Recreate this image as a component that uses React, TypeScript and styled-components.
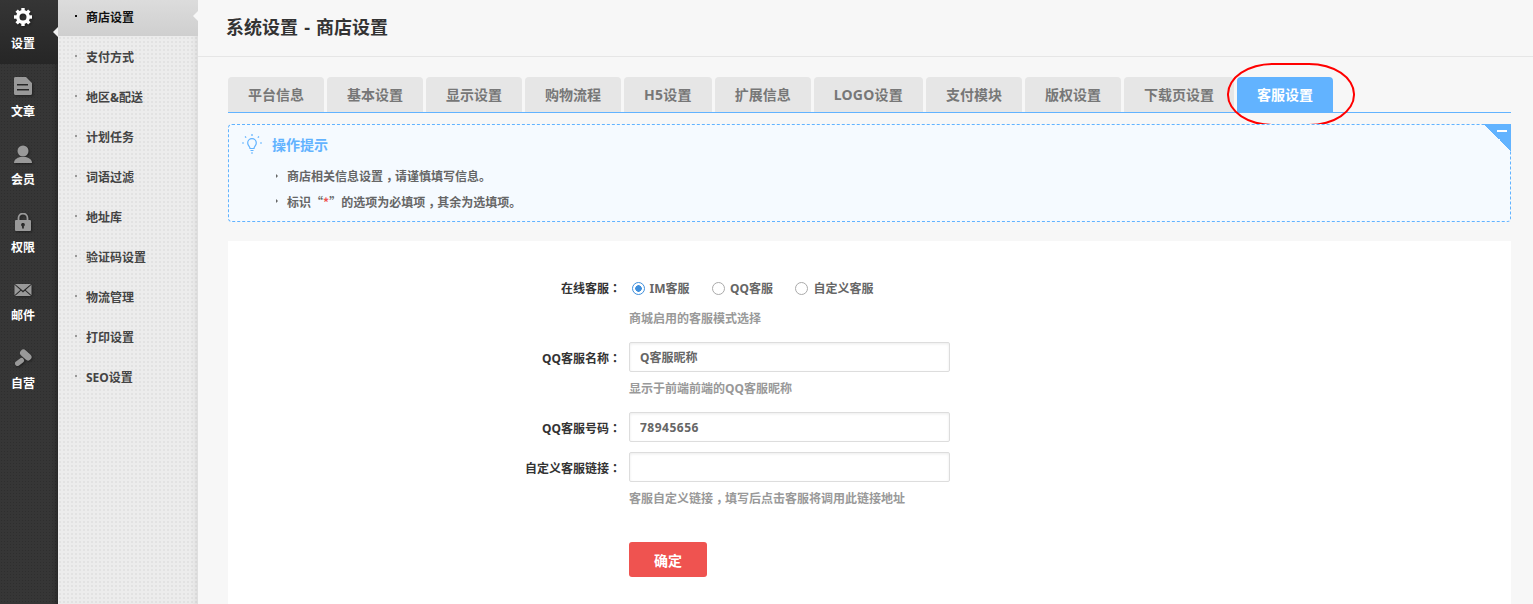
import React from 'react';
import styled, {createGlobalStyle} from 'styled-components';

const railItems = [
    {label: '设置', icon: 'gear', active: true},
    {label: '文章', icon: 'doc'},
    {label: '会员', icon: 'user'},
    {label: '权限', icon: 'lock'},
    {label: '邮件', icon: 'mail'},
    {label: '自营', icon: 'tool'},
];

const subItems = ['商店设置', '支付方式', '地区&配送', '计划任务', '词语过滤', '地址库', '验证码设置', '物流管理', '打印设置', 'SEO设置'];

const tabs = [
    {label: '平台信息'},
    {label: '基本设置'},
    {label: '显示设置'},
    {label: '购物流程'},
    {label: 'H5设置', latin: true},
    {label: '扩展信息'},
    {label: 'LOGO设置', latin: true},
    {label: '支付模块'},
    {label: '版权设置'},
    {label: '下载页设置'},
    {label: '客服设置', active: true},
];

const RailIcon = ({name}: {name: string}) => {
    const fill = name === 'gear' ? '#fff' : '#999';
    return (
        <svg width="18" height="18" viewBox="0 0 18 18" fill={fill}>
            {name === 'gear' && (
                <>
                    <circle cx="9" cy="9" r="5.200" fill="none" stroke="#fff" strokeWidth="3.400"/>
                    {[0, 45, 90, 135, 180, 225, 270, 315].map((deg) => (
                        <rect key={deg} x="7.300" y="0" width="3.400" height="4" transform={`rotate(${deg} 9 9)`}/>
                    ))}
                </>
            )}
            {name === 'doc' && (
                <path fillRule="evenodd"
                      d="M1.500 0H12l6 6v10.500a1.500 1.500 0 0 1-1.500 1.500h-15A1.500 1.500 0 0 1 0 16.500v-15A1.500 1.500 0 0 1 1.500 0zM3 7v1.600h11V7H3zm0 5v1.600h12V12H3z"/>
            )}
            {name === 'user' && (
                <>
                    <circle cx="9" cy="6" r="5.500"/>
                    <path d="M0 18c0-3.500 3-5 6-6h6c3 1 6 2.500 6 6z"/>
                </>
            )}
            {name === 'lock' && (
                <>
                    <path d="M4.500 8V5a4.500 4.500 0 0 1 9 0v3" fill="none" stroke="#999" strokeWidth="1.800"/>
                    <path fillRule="evenodd"
                          d="M2 7h14a1 1 0 0 1 1 1v9a1 1 0 0 1-1 1H2a1 1 0 0 1-1-1V8a1 1 0 0 1 1-1zm7 3a1.800 1.800 0 0 0-.9 3.400V15.500h1.800v-2.100A1.800 1.800 0 0 0 9 10z"/>
                </>
            )}
            {name === 'mail' && (
                <path d="M1 3h16L9 9.800 1 3zM.5 3.800 6.300 9 .5 14.300V3.800zm17 0v10.500L11.700 9l5.800-5.200zM7 9.700l2 1.700 2-1.700 6 5.300H1l6-5.300z"/>
            )}
            {name === 'tool' && (
                <>
                    <path d="M9.500 4 14 8" stroke="#999" strokeWidth="7" strokeLinecap="round"/>
                    <path d="M3.500 14.500 7.500 11.500" stroke="#999" strokeWidth="5" strokeLinecap="round"/>
                </>
            )}
        </svg>
    );
};

const App = () => {
    return (
        <Page>
            <GlobalStyle/>
            <Rail>
                {railItems.map((item) => (
                    <RailItem key={item.label} $active={item.active}>
                        <IconSlot $active={item.active}>
                            <RailIcon name={item.icon}/>
                        </IconSlot>
                        <RailLabel>{item.label}</RailLabel>
                    </RailItem>
                ))}
            </Rail>

            <SubMenu>
                {subItems.map((item, i) => (
                    <SubItem key={item} $active={i === 0}>{item}</SubItem>
                ))}
            </SubMenu>

            <Main>
                <TopBar>
                    <PageTitle>系统设置 - 商店设置</PageTitle>
                </TopBar>
                <Content>
                    <TabBar>
                        {tabs.map((tab) => (
                            <Tab key={tab.label} $active={tab.active} $latin={tab.latin}>{tab.label}</Tab>
                        ))}
                        <TabCircle/>
                    </TabBar>

                    <Notice>
                        <NoticeFold/>
                        <NoticeTitle>
                            <svg width="20" height="20" viewBox="0 0 20 20" fill="none" stroke="#62b3ff" strokeWidth="1.200">
                                <path d="M8 14.500c0-2-2.300-2.800-2.300-5.500a4.300 4.300 0 0 1 8.600 0c0 2.700-2.300 3.500-2.300 5.500z"/>
                                <path d="M8.500 16.500h3M9 19h2M10 0v2M0 9h2M18 9h2M3 2.500l1.200 1.200M17 2.500l-1.200 1.200"/>
                            </svg>
                            操作提示
                        </NoticeTitle>
                        <NoticeLine>商店相关信息设置<Comma>，</Comma>请谨慎填写信息。</NoticeLine>
                        <NoticeLine>标识<CjkText>“<Required>*</Required>”</CjkText>的选项为必填项<Comma>，</Comma>其余为选填项。</NoticeLine>
                    </Notice>

                    <FormCard>
                        <RadioRow>
                            <FieldLabel>在线客服<Colon>：</Colon></FieldLabel>
                            <RadioOption><Radio $checked/>IM客服</RadioOption>
                            <RadioOption><Radio/>QQ客服</RadioOption>
                            <RadioOption><Radio/>自定义客服</RadioOption>
                        </RadioRow>
                        <Hint>商城启用的客服模式选择</Hint>

                        <InputRow>
                            <FieldLabel>QQ客服名称<Colon>：</Colon></FieldLabel>
                            <TextInput defaultValue="Q客服昵称"/>
                        </InputRow>
                        <Hint>显示于前端前端的QQ客服昵称</Hint>

                        <InputRow>
                            <FieldLabel>QQ客服号码<Colon>：</Colon></FieldLabel>
                            <TextInput $number defaultValue="78945656"/>
                        </InputRow>
                        <InputRow>
                            <FieldLabel>自定义客服链接<Colon>：</Colon></FieldLabel>
                            <TextInput/>
                        </InputRow>
                        <Hint>客服自定义链接<Comma>，</Comma>填写后点击客服将调用此链接地址</Hint>

                        <SubmitButton>确定</SubmitButton>
                    </FormCard>
                </Content>
            </Main>
        </Page>
    );
};

export default App;

const GlobalStyle = createGlobalStyle`
    html, body {
        margin: 0;
        height: 100%;
        overflow: hidden;
        background: #f7f7f7;
    }

    * {
        box-sizing: border-box;
    }

    body, input, button {
        font-family: "Noto Sans", "Noto Sans CJK SC", sans-serif;
        font-weight: 700;
    }
`;

const Page = styled.div`
    display: flex;
    height: 604px;
    overflow: hidden;
`;

const Rail = styled.nav`
    width: 58px;
    flex-shrink: 0;
    background-color: #363636;
    background-image: radial-gradient(#2e2e2e 1px, transparent 1px);
    background-size: 3px 3px;
    box-shadow: inset -6px 0 6px -6px rgba(0, 0, 0, 0.5);
`;

const RailItem = styled.div<{ $active?: boolean }>`
    position: relative;
    height: ${(p) => (p.$active ? '64px' : '68px')};
    margin-bottom: ${(p) => (p.$active ? '4px' : '0')};
    padding: 8px 12px 0 0;
    display: flex;
    flex-direction: column;
    align-items: center;
    background: ${(p) => (p.$active ? 'linear-gradient(#353535, #262626)' : 'transparent')};

    &::after {
        content: '';
        display: ${(p) => (p.$active ? 'block' : 'none')};
        position: absolute;
        right: 0;
        top: 27px;
        border: 5px solid transparent;
        border-right-color: #f0f0f0;
        border-left-width: 0;
    }
`;

const IconSlot = styled.div<{ $active?: boolean }>`
    display: flex;
    align-items: ${(p) => (p.$active ? 'flex-start' : 'flex-end')};
    height: 19px;
    filter: drop-shadow(1px 1px 1px rgba(0, 0, 0, 0.4));

    svg {
        display: block;
    }
`;

const RailLabel = styled.span`
    margin-top: 7px;
    font-size: 12px;
    line-height: 20px;
    color: #fff;
`;

const SubMenu = styled.nav`
    width: 140px;
    flex-shrink: 0;
    background-color: #ececec;
    background-image: radial-gradient(#e2e2e2 1px, transparent 1px);
    background-size: 4px 4px;
    box-shadow: inset -8px 0 8px -8px rgba(0, 0, 0, 0.12);
`;

const SubItem = styled.div<{ $active?: boolean }>`
    position: relative;
    height: 36px;
    margin-bottom: 4px;
    padding-left: 28px;
    font-size: 12px;
    line-height: 36px;
    color: ${(p) => (p.$active ? '#111' : '#444')};
    background: ${(p) => (p.$active ? 'linear-gradient(#dcdcdc, #cfcfcf)' : 'transparent')};

    &::before {
        content: '';
        position: absolute;
        left: 17px;
        top: 15px;
        width: 2px;
        height: 2px;
        background: ${(p) => (p.$active ? '#111' : '#999')};
    }

    &::after {
        content: '';
        display: ${(p) => (p.$active ? 'block' : 'none')};
        position: absolute;
        right: 0;
        top: 11px;
        border: 5.500px solid transparent;
        border-right-color: #f7f7f7;
        border-left-width: 0;
    }
`;

const Main = styled.main`
    flex: 1;
    min-width: 0;
`;

const TopBar = styled.header`
    height: 57px;
    padding-left: 28px;
    border-bottom: 1px solid #e6e6e6;
`;

const PageTitle = styled.h1`
    margin: 0;
    font-size: 18px;
    line-height: 54px;
    font-weight: 700;
    word-spacing: 1.500px;
    color: #333;
`;

const Content = styled.div`
    padding: 20px 22px 0 30px;
`;

const TabBar = styled.div`
    position: relative;
    display: flex;
    gap: 3px;
    height: 36px;
    border-bottom: 1px solid #62b3ff;
`;

const Tab = styled.div<{ $active?: boolean; $latin?: boolean }>`
    height: 35px;
    padding: 0 20px;
    border-radius: 4px 4px 0 0;
    font-size: 14px;
    line-height: 36px;
    letter-spacing: ${(p) => (p.$latin ? '0.25px' : '0')};
    color: ${(p) => (p.$active ? '#fff' : '#777')};
    background: ${(p) => (p.$active ? '#62b3ff' : '#e6e6e6')};
`;

const TabCircle = styled.div`
    position: absolute;
    left: 999px;
    top: -14px;
    width: 128px;
    height: 63px;
    border: 2px solid #f00;
    border-radius: 46px / 31px;
    pointer-events: none;
`;

const Notice = styled.section`
    position: relative;
    height: 98px;
    margin-top: 11px;
    padding: 9px 13px;
    border: 1px dashed #62b3ff;
    border-radius: 4px;
    background: #f5faff;
`;

const NoticeFold = styled.div`
    position: absolute;
    top: -1px;
    right: -1px;
    width: 27px;
    height: 27px;
    background: linear-gradient(45deg, transparent 50%, #62b3ff 50%);

    &::after {
        content: '';
        position: absolute;
        top: 6px;
        right: 4px;
        width: 10px;
        height: 2px;
        background: #fff;
    }
`;

const NoticeTitle = styled.div`
    display: flex;
    align-items: center;
    gap: 10px;
    height: 20px;
    margin-bottom: 10px;
    font-size: 14px;
    color: #62b3ff;
`;

const NoticeLine = styled.div`
    position: relative;
    height: 25px;
    padding-left: 45px;
    font-size: 12px;
    line-height: 25px;
    color: #666;

    &::before {
        content: '';
        position: absolute;
        left: 34px;
        top: 10px;
        border: 2.500px solid transparent;
        border-left-color: #666;
        border-right-width: 0;
    }
`;

const Comma = styled.span`
    padding-left: 3px;
    letter-spacing: -3px;
`;

const CjkText = styled.span`
    font-family: "Noto Sans CJK SC", sans-serif;
`;

const Required = styled.span`
    color: #ef5350;
`;

const Colon = styled.span`
    font-family: "Noto Sans CJK TC", sans-serif;
`;

const FormCard = styled.section`
    margin-top: 19px;
    height: 363px;
    padding: 33px 0 0 401px;
    background: #fff;
`;

const FieldLabel = styled.label`
    position: absolute;
    right: calc(100% + 8px);
    white-space: nowrap;
    font-size: 12px;
    color: #333;
`;

const RadioRow = styled.div`
    position: relative;
    display: flex;
    align-items: center;
    gap: 22.500px;
    height: 28px;
    padding-left: 2.500px;
`;

const RadioOption = styled.span`
    display: flex;
    align-items: center;
    gap: 5px;
    font-size: 12px;
    color: #666;
`;

const Radio = styled.span<{ $checked?: boolean }>`
    width: 13px;
    height: 13px;
    border-radius: 50%;
    border: 1px solid ${(p) => (p.$checked ? '#3f8fdc' : '#aaa')};
    background: ${(p) => (p.$checked ? 'radial-gradient(#3f8fdc 3px, #fff 3.500px)' : '#fff')};
`;

const Hint = styled.div`
    height: 30px;
    font-size: 12px;
    line-height: 34px;
    color: #999;
`;

const InputRow = styled.div`
    position: relative;
    display: flex;
    align-items: center;
    width: 321px;
    margin-top: 10px;

    label {
        margin-top: 2px;
    }
`;

const TextInput = styled.input<{ $number?: boolean }>`
    width: 321px;
    height: 30px;
    padding: 0 10px;
    border: 1px solid #ddd;
    border-radius: 2px;
    box-shadow: inset 0 1px 3px rgba(0, 0, 0, 0.08);
    font-size: 12px;
    letter-spacing: ${(p) => (p.$number ? '0.5px' : '0')};
    color: #666;
    outline: none;
`;

const SubmitButton = styled.button`
    display: block;
    width: 78px;
    height: 35px;
    margin-top: 30px;
    border: 0;
    border-radius: 3px;
    background: #ef5350;
    color: #fff;
    font-size: 14px;
`;
